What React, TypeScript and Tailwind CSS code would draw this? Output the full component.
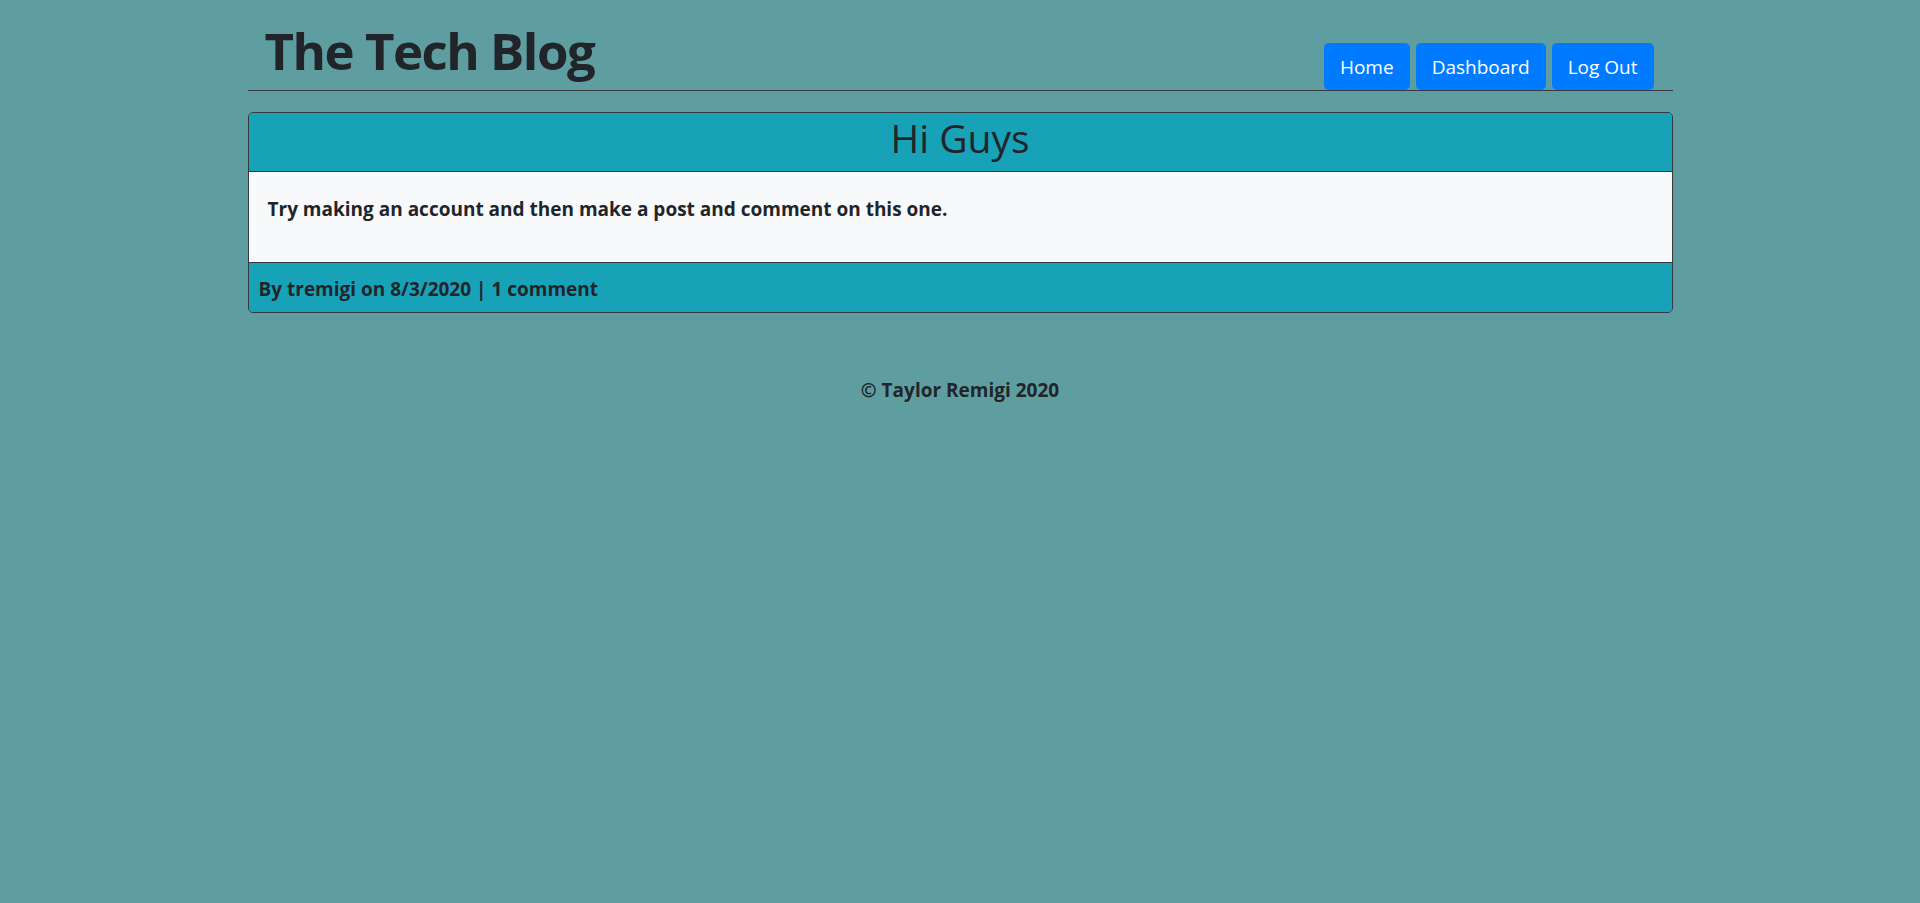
import React from 'react';

const NavButton = ({ label }: { label: string }) => (
  <a
    href="#"
    className="h-[47px] px-4 pt-[2px] flex items-center rounded-[5px] bg-[#007bff] text-white text-[19px] hover:bg-[#0069d9]"
  >
    {label}
  </a>
);

const App = () => {
  return (
    <div className="min-h-[903px] bg-[#5f9ea0] text-[#212529] font-['Open_Sans',sans-serif]">
      <header className="w-[1425px] mx-auto h-[91px] flex justify-between items-end border-b border-[#343a40]">
        <h1 className="self-start pt-[25px] pl-[17px] text-[51px] font-bold leading-none tracking-[-1.5px]">The Tech Blog</h1>
        <nav className="flex gap-[6px] pr-[19px]">
          <NavButton label="Home" />
          <NavButton label="Dashboard" />
          <NavButton label="Log Out" />
        </nav>
      </header>

      <main className="w-[1425px] mx-auto mt-[21px]">
        <article className="border border-[#343a40] rounded-[5px] overflow-hidden">
          <div className="h-[59px] pb-[10px] bg-[#17a2b8] border-b border-[#343a40] flex items-center justify-center">
            <h2 className="text-[39px] font-medium leading-none">Hi Guys</h2>
          </div>
          <div className="h-[91px] bg-[#f8f9fa] border-b border-[#343a40] px-[19px] pt-[23px]">
            <p className="text-[19px] font-bold">Try making an account and then make a post and comment on this one.</p>
          </div>
          <div className="h-[49px] pt-[4px] bg-[#17a2b8] px-[10px] flex items-center">
            <p className="text-[19px] font-bold">By tremigi on 8/3/2020 | 1 comment</p>
          </div>
        </article>
      </main>

      <footer className="mt-[63px] text-center text-[19px] font-bold">© Taylor Remigi 2020</footer>
    </div>
  );
};

export default App;
